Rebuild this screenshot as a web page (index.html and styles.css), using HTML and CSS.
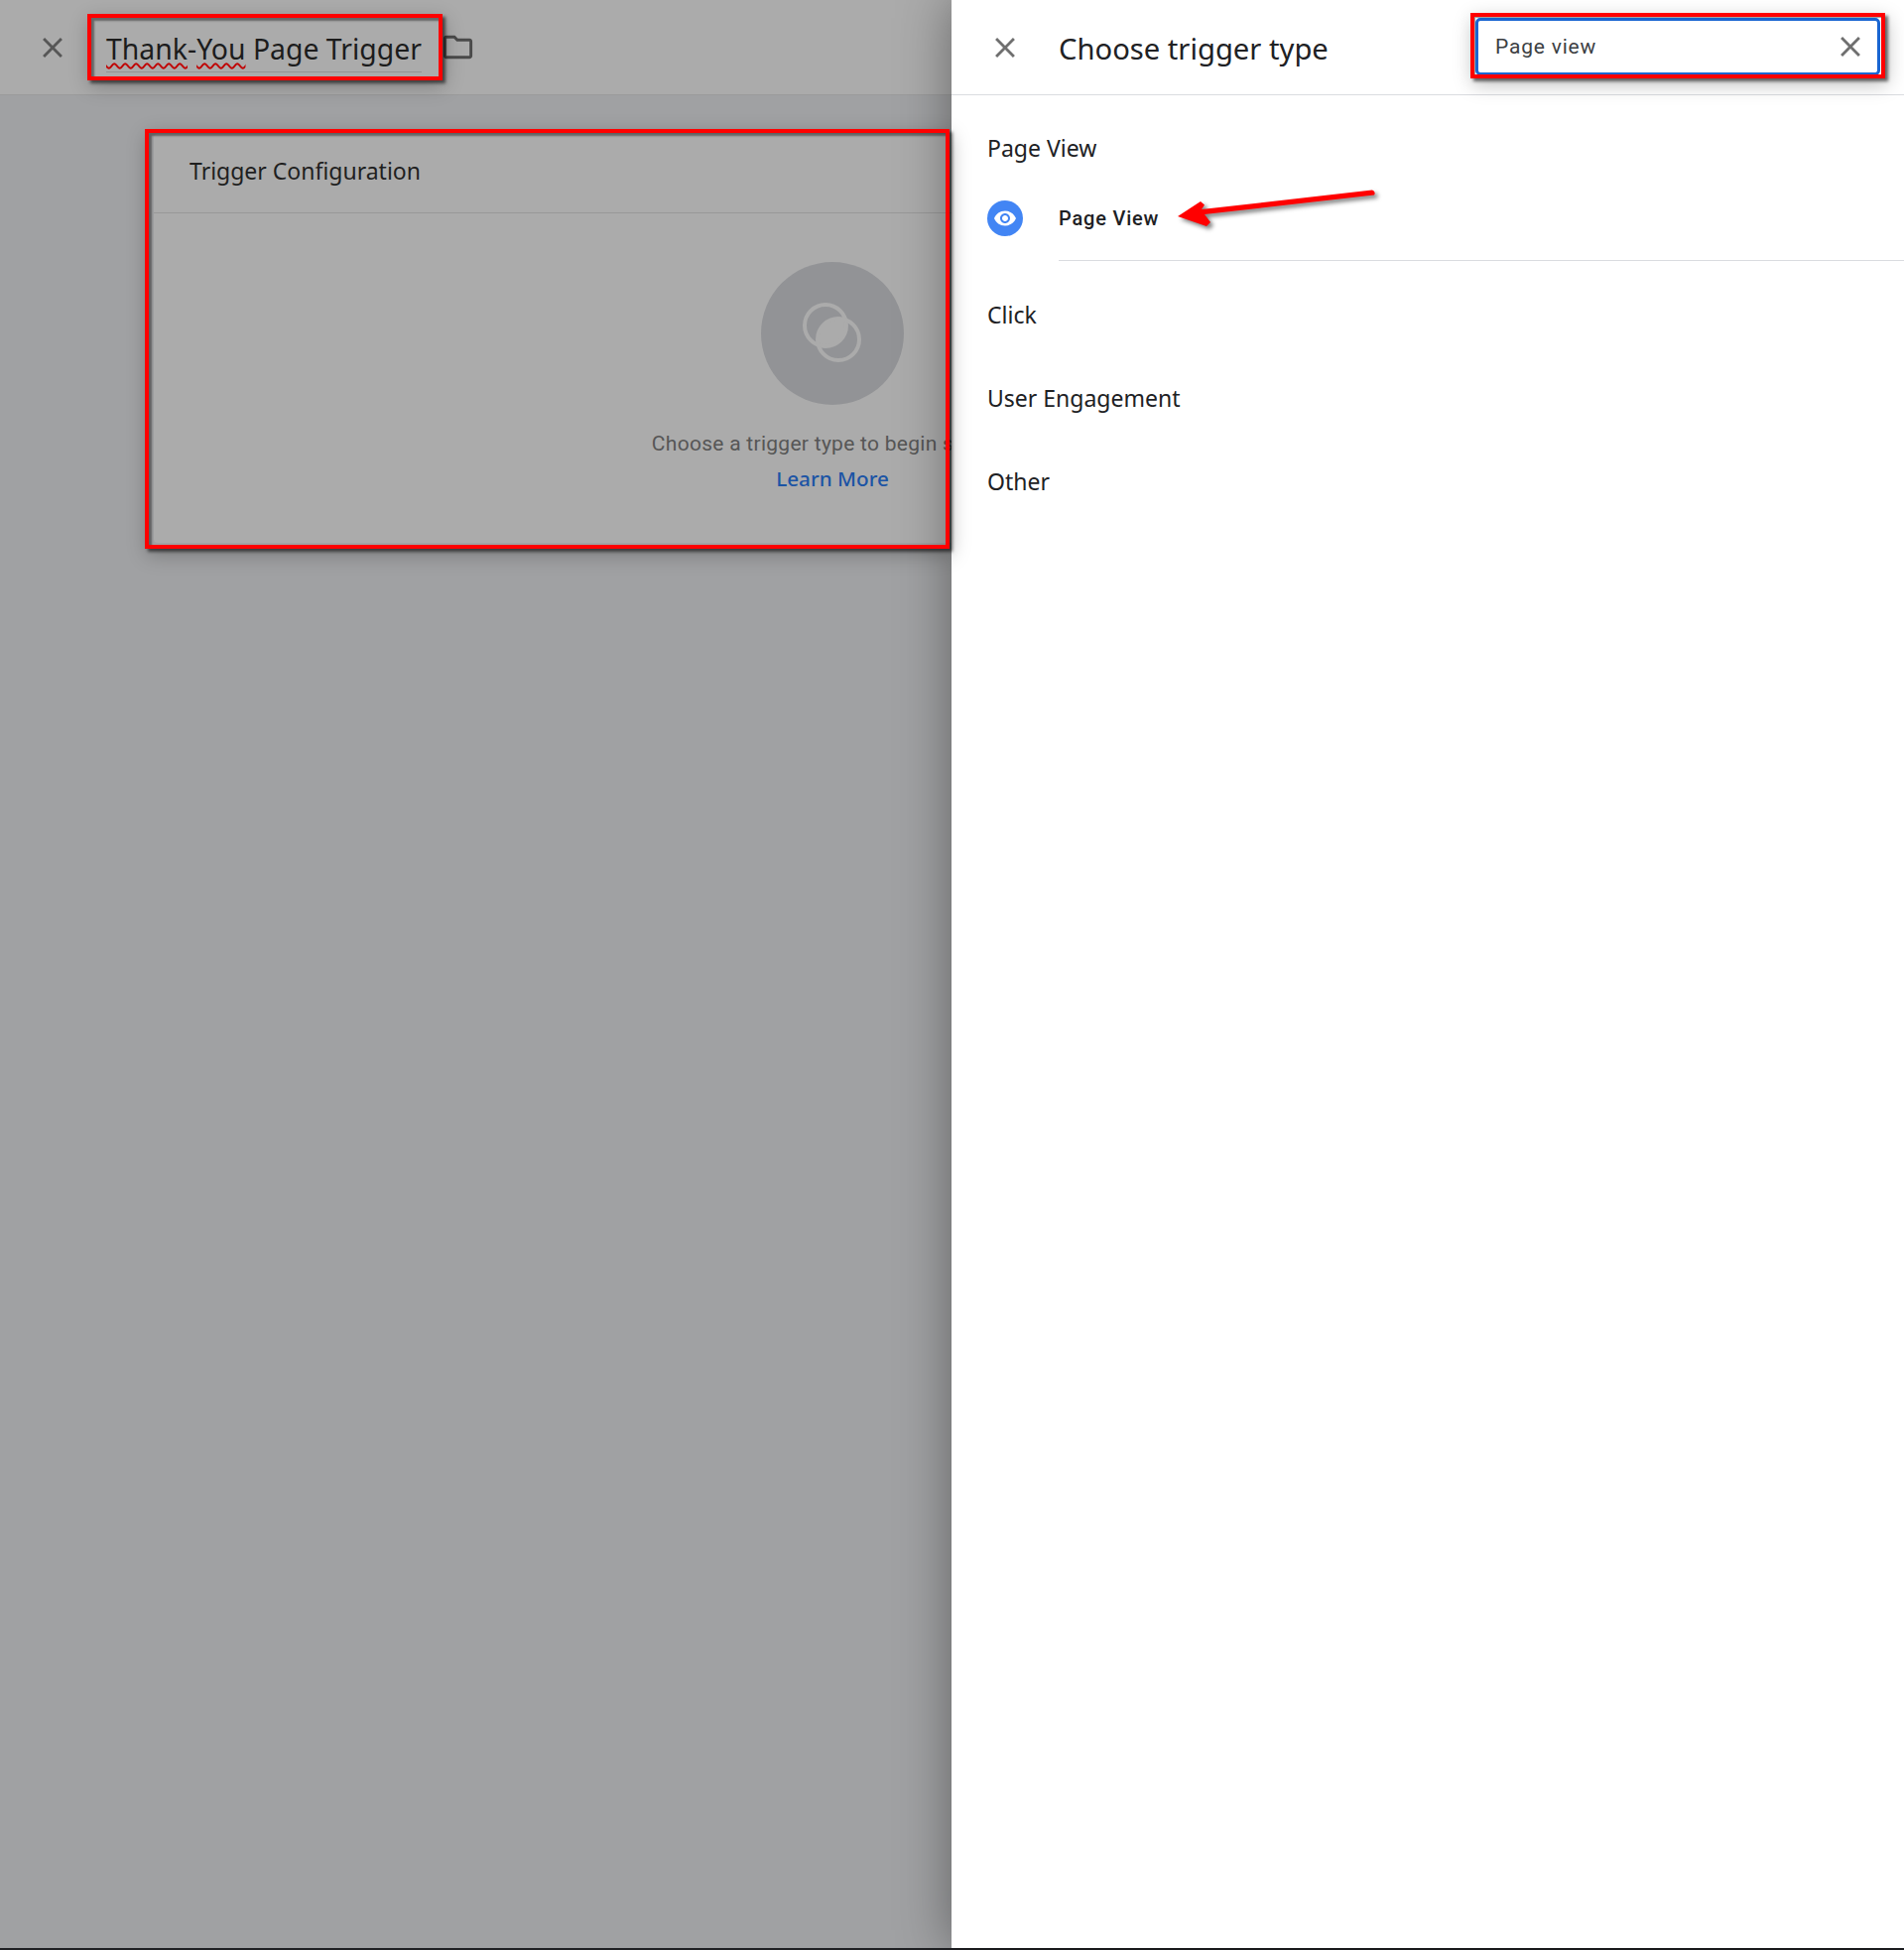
FILE: index.html
```html
<!DOCTYPE html>
<html lang="en">

<head>
  <meta charset="UTF-8">
  <title>Choose trigger type</title>
  <link rel="stylesheet" href="styles.css">
</head>

<body>
  <div class="page">
    <section class="editor">
      <header class="editor-header">
        <button class="icon-btn close-btn">
          <svg viewBox="0 0 24 24" width="34" height="34"><path d="M19 6.41L17.59 5 12 10.59 6.41 5 5 6.41 10.59 12 5 17.59 6.41 19 12 13.41 17.59 19 19 17.59 13.41 12z"/></svg>
        </button>
        <div class="trigger-name"><span class="misspelt">Thank</span>-<span class="misspelt">You</span> Page Trigger</div>
        <svg class="folder-icon" viewBox="0 0 24 24" width="35" height="35"><path d="M20 6h-8l-2-2H4c-1.1 0-2 .9-2 2v12c0 1.1.9 2 2 2h16c1.1 0 2-.9 2-2V8c0-1.1-.9-2-2-2zm0 12H4V6h5.17l2 2H20v10z"/></svg>
      </header>

      <div class="card">
        <div class="card-title">Trigger Configuration</div>
        <div class="card-body">
          <div class="empty-circle">
            <svg viewBox="0 0 144 144" width="144" height="144">
              <defs>
                <clipPath id="ringClip"><circle cx="65" cy="64" r="21"/></clipPath>
              </defs>
              <circle class="ring-fill" cx="78" cy="78" r="21" clip-path="url(#ringClip)"/>
              <circle class="ring" cx="65" cy="64" r="21"/>
              <circle class="ring" cx="78" cy="78" r="21"/>
            </svg>
          </div>
          <p class="empty-text">Choose a trigger type to begin setup...</p>
          <a class="learn-more">Learn More</a>
        </div>
      </div>
    </section>

    <aside class="panel">
      <header class="panel-header">
        <button class="icon-btn panel-close">
          <svg viewBox="0 0 24 24" width="34" height="34"><path d="M19 6.41L17.59 5 12 10.59 6.41 5 5 6.41 10.59 12 5 17.59 6.41 19 12 13.41 17.59 19 19 17.59 13.41 12z"/></svg>
        </button>
        <h1>Choose trigger type</h1>
        <div class="search-box">
          <span>Page view</span>
          <svg viewBox="0 0 24 24" width="34" height="34"><path d="M19 6.41L17.59 5 12 10.59 6.41 5 5 6.41 10.59 12 5 17.59 6.41 19 12 13.41 17.59 19 19 17.59 13.41 12z"/></svg>
        </div>
      </header>

      <div class="type-group group-first">Page View</div>
      <div class="type-item">
        <span class="type-icon">
          <svg viewBox="0 0 24 24" width="24" height="24"><path d="M12 4.5C7 4.5 2.73 7.61 1 12c1.73 4.39 6 7.5 11 7.5s9.27-3.11 11-7.5c-1.73-4.39-6-7.5-11-7.5zM12 17c-2.76 0-5-2.24-5-5s2.24-5 5-5 5 2.24 5 5-2.24 5-5 5zm0-8c-1.66 0-3 1.34-3 3s1.34 3 3 3 3-1.34 3-3-1.34-3-3-3z"/></svg>
        </span>
        <span class="type-label">Page View</span>
      </div>
      <div class="type-group">Click</div>
      <div class="type-group">User Engagement</div>
      <div class="type-group">Other</div>
    </aside>
  </div>
  <div class="bottom-bar"></div>

  <!-- red annotations drawn over the screenshot -->
  <div class="mark mark-name"></div>
  <div class="mark mark-card"></div>
  <div class="mark mark-search"></div>
  <svg class="arrow" viewBox="0 0 220 50" width="220" height="50">
    <path d="M199 1.5Q203 3 201 6.5L30 26 36 34 32 38 3 28 26 13 30 16.5 27 21z"/>
  </svg>
</body>

</html>
```

FILE: styles.css
```css
* {
  box-sizing: border-box;
  margin: 0;
  padding: 0;
}

body {
  width: 1919px;
  height: 1965px;
  overflow: hidden;
  position: relative;
  font-family: 'Roboto', sans-serif;
  background: #fff;
}

.page {
  display: flex;
  height: 1963px;
}

.bottom-bar {
  height: 2px;
  background: #202124;
}

.icon-btn {
  display: flex;
  border: none;
  background: none;
}

/* left side, dimmed behind the panel */
.editor {
  width: 959px;
  flex: none;
  overflow: hidden;
  background: #a0a1a3;
}

.editor-header {
  display: flex;
  align-items: center;
  height: 96px;
  background: #ababab;
  border-bottom: 1px solid #9b9b9b;
  padding-left: 36px;
}

.close-btn svg {
  fill: #565656;
}

.trigger-name {
  margin: 2px 0 0 37px;
  height: 49px;
  padding-top: 6px;
  width: 318px;
  flex: none;
  font-family: 'Noto Sans', sans-serif;
  font-size: 28.4px;
  line-height: 38px;
  color: #1c1c1c;
  white-space: nowrap;
  border-bottom: 1px solid #939393;
}

.misspelt {
  text-decoration: underline wavy #c00000 1.5px;
  text-underline-offset: 3px;
}

.folder-icon {
  margin-left: 19px;
  fill: #4a4a4a;
}

.card {
  width: 1368px;
  margin: 39px 0 0 155px;
  height: 412px;
  background: #ababab;
  border-radius: 4px;
}

.card-title {
  height: 80px;
  padding: 20px 0 0 36px;
  font-family: 'Noto Sans', sans-serif;
  font-size: 23px;
  line-height: 35px;
  color: #1f1f1f;
  border-bottom: 1px solid #989898;
}

.card-body {
  display: flex;
  flex-direction: column;
  align-items: center;
  padding-top: 49px;
}

.empty-circle {
  width: 144px;
  height: 144px;
  border-radius: 50%;
  background: #929396;
}

.ring {
  fill: none;
  stroke: #ababab;
  stroke-width: 4;
}

.ring-fill {
  fill: #ababab;
}

.empty-text {
  margin-top: 26px;
  font-size: 21px;
  line-height: 26px;
  letter-spacing: 0.28px;
  color: #565656;
  white-space: nowrap;
}

.learn-more {
  margin-top: 9px;
  font-family: 'Noto Sans', sans-serif;
  font-size: 20.7px;
  line-height: 26px;
  font-weight: 500;
  color: #1b54a5;
}

/* right side panel */
.panel {
  flex: 1;
  background: #fff;
  box-shadow: 0 0 50px rgba(0, 0, 0, 0.4);
  position: relative;
}

.panel-header {
  display: flex;
  align-items: center;
  height: 96px;
  padding-left: 37px;
  border-bottom: 1px solid #dadce0;
}

.panel-close svg {
  fill: #6f6f6f;
}

.panel-header h1 {
  margin: 3px 0 0 37px;
  font-family: 'Noto Sans', sans-serif;
  font-size: 29.2px;
  font-weight: 400;
  color: #202124;
}

.search-box {
  display: flex;
  align-items: center;
  justify-content: space-between;
  width: 408px;
  height: 58px;
  margin: -2px 24px 0 auto;
  padding: 0 10px 0 17px;
  border: 3px solid #1a66d2;
  border-radius: 5px;
  font-size: 21px;
  letter-spacing: 0.8px;
  color: #3c4043;
}

.search-box svg {
  fill: #6f6f6f;
}

.type-group {
  height: 84px;
  padding: 38px 0 0 36px;
  font-family: 'Noto Sans', sans-serif;
  font-size: 23px;
  line-height: 32px;
  color: #202124;
}

.group-first {
  height: 64px;
  padding-top: 37px;
}

.type-item {
  display: flex;
  align-items: flex-start;
  height: 103px;
  margin-left: 36px;
  padding-top: 42px;
  position: relative;
}

.type-item::after {
  content: '';
  position: absolute;
  left: 72px;
  right: 0;
  bottom: 0;
  border-bottom: 1px solid #dadce0;
}

.type-icon {
  display: flex;
  align-items: center;
  justify-content: center;
  width: 36px;
  height: 36px;
  border-radius: 50%;
  background: #4285f4;
}

.type-icon svg {
  fill: #fff;
}

.type-label {
  margin-left: 36px;
  font-size: 20px;
  line-height: 36px;
  font-weight: 500;
  letter-spacing: 0.8px;
  color: #202124;
}

/* annotations */
.mark {
  position: absolute;
  border: 4px solid #f00;
  box-shadow: 3px 3px 3px rgba(0, 0, 0, 0.55), 2px 6px 18px rgba(0, 0, 0, 0.25), inset 3px 3px 2px rgba(0, 0, 0, 0.4);
}

.mark-name {
  left: 88px;
  top: 14px;
  width: 358px;
  height: 67px;
}

.mark-card {
  left: 146px;
  top: 130px;
  width: 811px;
  height: 423px;
}

.mark-search {
  left: 1482px;
  top: 13px;
  width: 418px;
  height: 66px;
  box-shadow: 3px 3px 3px rgba(0, 0, 0, 0.55), 2px 6px 18px rgba(0, 0, 0, 0.25), inset 1px 1px 1px rgba(0, 0, 0, 0.4);
}

.arrow {
  position: absolute;
  left: 1184px;
  top: 190px;
  fill: #f00;
  filter: drop-shadow(3px 3px 2px rgba(0, 0, 0, 0.5));
}
```
